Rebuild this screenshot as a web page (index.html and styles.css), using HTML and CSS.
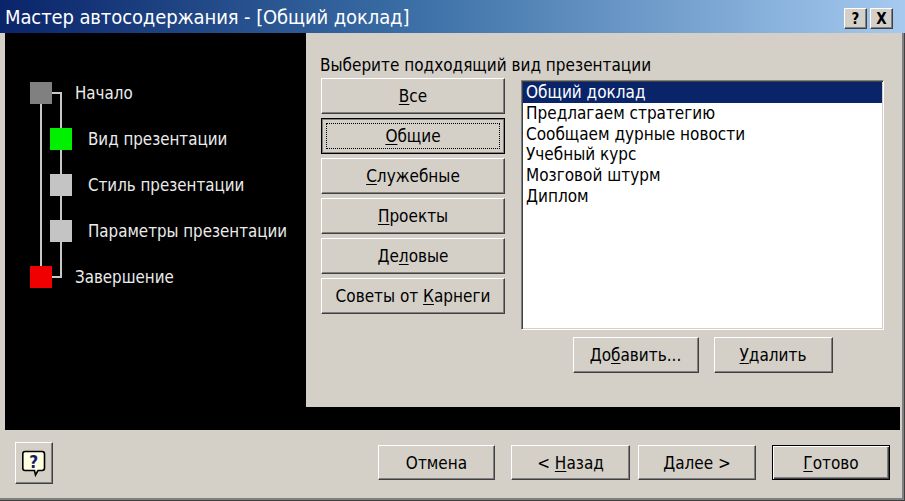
FILE: index.html
```html
<!DOCTYPE html>
<html lang="ru">
<head>
<meta charset="utf-8">
<title>Мастер автосодержания</title>
<link rel="stylesheet" href="styles.css">
</head>
<body>
<div class="window">
  <div class="titlebar">
    <span class="title">Мастер автосодержания - [Общий доклад]</span>
    <div class="tb-buttons">
      <span class="tb-btn">?</span>
      <span class="tb-btn">X</span>
    </div>
  </div>
  <div class="main">
    <div class="steps">
      <svg class="tree" width="80" height="300" viewBox="0 0 80 300">
        <g stroke="#c8c8c8" stroke-width="2" fill="none">
          <line x1="36" y1="60" x2="36" y2="244"/>
          <line x1="56" y1="60" x2="56" y2="244"/>
          <line x1="40" y1="60" x2="57" y2="60"/>
          <line x1="40" y1="244" x2="57" y2="244"/>
        </g>
      </svg>
      <div class="step lvl0"><span class="sq sq-start"></span><span>Начало</span></div>
      <div class="step lvl1"><span class="sq sq-current"></span><span>Вид презентации</span></div>
      <div class="step lvl1"><span class="sq sq-todo"></span><span>Стиль презентации</span></div>
      <div class="step lvl1"><span class="sq sq-todo"></span><span>Параметры презентации</span></div>
      <div class="step lvl0"><span class="sq sq-end"></span><span>Завершение</span></div>
    </div>
    <div class="content">
      <div class="prompt">Выберите подходящий вид презентации</div>
      <div class="columns">
        <div class="cats">
          <div class="btn"><span><u>В</u>се</span></div>
          <div class="btn pressed"><span><u>О</u>бщие</span></div>
          <div class="btn"><span><u>С</u>лужебные</span></div>
          <div class="btn"><span><u>П</u>роекты</span></div>
          <div class="btn"><span>Де<u>л</u>овые</span></div>
          <div class="btn"><span>Советы от <u>К</u>арнеги</span></div>
        </div>
        <div class="listcol">
          <div class="listbox">
            <div class="item sel">Общий доклад</div>
            <div class="item">Предлагаем стратегию</div>
            <div class="item">Сообщаем дурные новости</div>
            <div class="item">Учебный курс</div>
            <div class="item">Мозговой штурм</div>
            <div class="item">Диплом</div>
          </div>
          <div class="list-actions">
            <div class="btn w-add"><span>До<u>б</u>авить...</span></div>
            <div class="btn w-del"><span><u>У</u>далить</span></div>
          </div>
        </div>
      </div>
    </div>
  </div>
  <div class="footer">
    <div class="btn help">
      <svg width="24" height="27" viewBox="0 0 24 27">
        <path d="M3 1.5 H20 Q22.5 1.5 22.5 4 V18 Q22.5 20.5 20 20.5 H16 L13.5 25 L12.5 20.5 H3 Q0.8 20.5 0.8 18 V4 Q0.8 1.5 3 1.5 Z" fill="#ffffe1" stroke="#000" stroke-width="1.6"/>
        <text x="11.6" y="17.5" text-anchor="middle" font-family="DejaVu Sans, sans-serif" font-weight="bold" font-size="17" fill="#101c70">?</text>
      </svg>
    </div>
    <div class="footer-buttons">
      <div class="btn w-cancel"><span>Отмена</span></div>
      <div class="btn w-back"><span>&lt; <u>Н</u>азад</span></div>
      <div class="btn w-next"><span><u>Д</u>алее &gt;</span></div>
      <div class="btn default w-done"><span><u>Г</u>отово</span></div>
    </div>
  </div>
</div>
</body>
</html>
```
FILE: styles.css
```css
html, body {
  margin: 0;
  padding: 0;
  background: #d4d0c8;
}

.window {
  width: 905px;
  height: 501px;
  box-sizing: border-box;
  background: #d4d0c8;
  display: flex;
  flex-direction: column;
  font-family: "DejaVu Sans Condensed", "DejaVu Sans", sans-serif;
  font-stretch: condensed;
  font-size: 17px;
  color: #000;
  box-shadow: inset -1px -1px #404040, inset -3px -3px #808080;
  overflow: hidden;
}

/* Title bar */
.titlebar {
  height: 33px;
  flex-shrink: 0;
  background: linear-gradient(to right, #0a246a 0%, #3a6ea5 45%, #a6caf0 100%);
  display: flex;
  align-items: center;
  justify-content: space-between;
  padding: 0 12px 0 5px;
  color: #fff;
}

.title {
  font-size: 20px;
  letter-spacing: -0.1px;
}

.tb-buttons {
  display: flex;
  gap: 3px;
  margin-top: 4px;
}

.tb-btn {
  width: 23px;
  height: 21px;
  box-sizing: border-box;
  background: #d4d0c8;
  border: 1px solid;
  border-color: #fff #404040 #404040 #fff;
  box-shadow: inset -1px -1px #808080;
  display: flex;
  align-items: center;
  justify-content: center;
  font-family: "DejaVu Sans", sans-serif;
  font-weight: bold;
  font-size: 15px;
  color: #000;
}

/* Main black area */
.main {
  margin: 0 5px;
  height: 397px;
  flex-shrink: 0;
  background: #000;
  display: flex;
  align-items: flex-start;
}

.steps {
  width: 301px;
  height: 100%;
  box-sizing: border-box;
  padding-top: 37px;
  position: relative;
  z-index: 0;
  color: #ececec;
  font-size: 16.8px;
}

.tree {
  position: absolute;
  left: 0;
  top: 0;
  z-index: -1;
}

.step {
  height: 46px;
  display: flex;
  align-items: center;
}

.sq {
  width: 22px;
  height: 22px;
  flex-shrink: 0;
}

.lvl0 .sq {
  margin-left: 25px;
  margin-right: 23px;
}

.lvl1 .sq {
  margin-left: 45px;
  margin-right: 16px;
}

.sq-start { background: #808080; }
.sq-current { background: #00f000; }
.sq-todo { background: #c4c4c4; }
.sq-end { background: #f00000; }

/* Content panel */
.content {
  flex: 1;
  height: 374px;
  box-sizing: border-box;
  background: #d4d0c8;
  padding: 23px 0 0 15px;
}

.prompt {
  line-height: 18px;
  margin-left: -1px;
}

.columns {
  display: flex;
  margin-top: 4px;
}

.cats {
  width: 184px;
  display: flex;
  flex-direction: column;
  gap: 4px;
}

.btn {
  height: 36px;
  box-sizing: border-box;
  background: #d4d0c8;
  border: 1px solid;
  border-color: #fff #404040 #404040 #fff;
  box-shadow: inset -1px -1px #808080;
  display: flex;
  align-items: center;
  justify-content: center;
  position: relative;
  color: #000;
  white-space: nowrap;
}

.btn u {
  text-underline-offset: 2px;
}

.btn.pressed {
  border-color: #000;
  box-shadow: inset 1px 1px #808080, inset -1px -1px #808080;
}

.btn.pressed::after {
  content: "";
  position: absolute;
  inset: 4px;
  border: 1px dotted #000;
}

.btn.default {
  border-color: #000;
  box-shadow: inset 1px 1px #fff, inset -1px -1px #404040, inset -2px -2px #808080;
}

.listcol {
  margin-left: 16px;
  width: 363px;
  display: flex;
  flex-direction: column;
  align-items: center;
}

.listbox {
  align-self: stretch;
  margin-top: 2px;
  height: 250px;
  box-sizing: border-box;
  background: #fff;
  border: 1px solid;
  border-color: #808080 #fff #fff #808080;
  box-shadow: inset 1px 1px #404040, inset -1px -1px #d4d0c8;
  padding: 1px;
}

.item {
  height: 20.8px;
  line-height: 20px;
  padding-left: 3px;
  color: #000;
}

.item.sel {
  background: #0a246a;
  color: #fff;
}

.list-actions {
  display: flex;
  gap: 15px;
  margin-top: 7px;
}

.w-add { width: 126px; }
.w-del { width: 119px; }

/* Footer */
.footer {
  flex: 1;
  display: flex;
  align-items: flex-start;
  padding: 0 15px;
}

.btn.help {
  width: 38px;
  height: 42px;
  margin-top: 12px;
}

.footer-buttons {
  margin-left: auto;
  margin-top: 15px;
  display: flex;
}

.footer-buttons .btn {
  height: 35px;
}

.w-cancel { width: 117px; }
.w-back { width: 119px; margin-left: 16px; }
.w-next { width: 118px; margin-left: 8px; }
.w-done { width: 118px; margin-left: 16px; }
```
